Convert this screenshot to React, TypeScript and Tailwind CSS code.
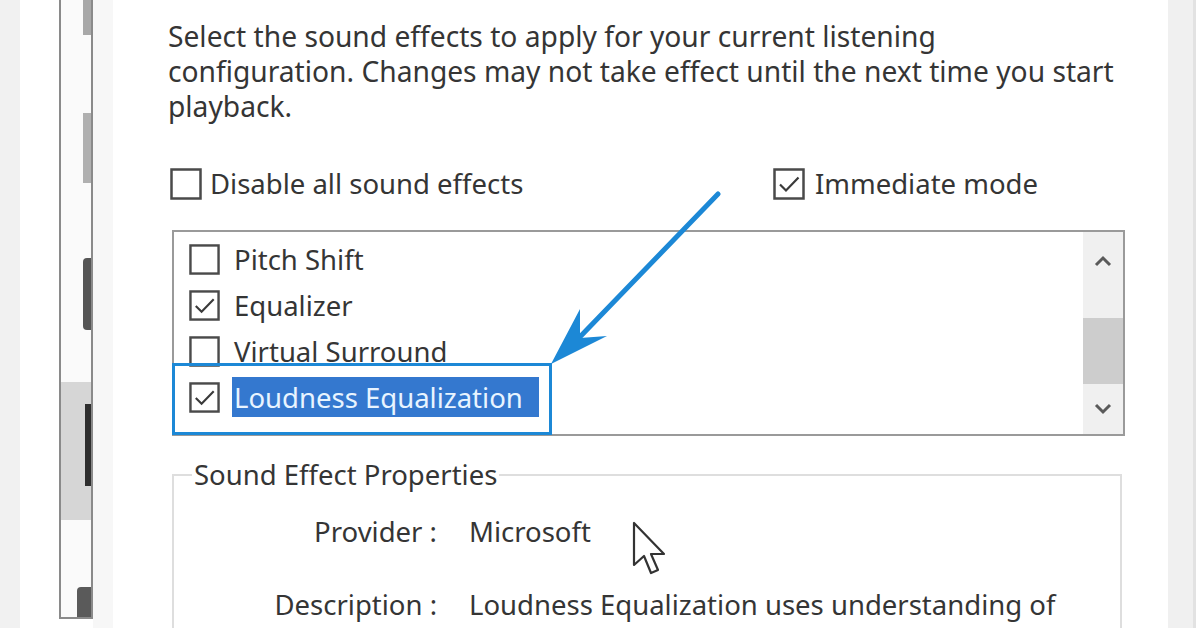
import React from "react";

const font = { fontFamily: '"Noto Sans", "Open Sans", sans-serif' };

function Box({ checked, size = 32 }: { checked?: boolean; size?: number }) {
  return (
    <svg width={size} height={size} viewBox="0 0 32 32" className="shrink-0">
      <rect x="1.5" y="1.5" width="29" height="29" fill="white" stroke="#4a4a4a" strokeWidth="2.5" />
      {checked && <path d="M7 16.5 L13 22.5 L25.5 9.5" fill="none" stroke="#3a3a3a" strokeWidth="2.2" />}
    </svg>
  );
}

function Chevron({ up }: { up?: boolean }) {
  return (
    <svg width="20" height="14" viewBox="0 0 20 14">
      <path d={up ? "M3 11 L10 4 L17 11" : "M3 3 L10 10 L17 3"} fill="none" stroke="#5a5a5a" strokeWidth="3" />
    </svg>
  );
}

export default function App() {
  return (
    <div className="relative flex w-[1196px] h-[628px] overflow-hidden bg-white text-[#353535]" style={font}>
      {/* window edge on the left */}
      <div className="flex h-full shrink-0">
        <div className="w-[20px] bg-[#f1f1f1]" />
        <div className="w-[39px] bg-white" />
        <div className="w-[34px] h-[619px] border-x-2 border-b-2 border-[#8a8a8a] bg-[#fafafa] flex flex-col items-end">
          <div className="h-[35px] w-[8px] bg-[#a8a8a8]" />
          <div className="h-[78px]" />
          <div className="h-[70px] w-[8px] bg-[#b0b0b0]" />
          <div className="h-[75px]" />
          <div className="h-[72px] w-[8px] bg-[#555] rounded-l-sm" />
          <div className="h-[52px]" />
          <div className="w-full h-[138px] bg-[#d6d6d6] flex flex-col items-end">
            <div className="h-[22px]" />
            <div className="h-[82px] w-[6px] bg-[#2e2e2e]" />
          </div>
          <div className="flex-1" />
          <div className="h-[30px] w-[14px] bg-[#5a5a5a] rounded-tl" />
        </div>
        <div className="w-[20px] bg-[#f7f7f7]" />
      </div>

      {/* dialog body */}
      <div className="w-[1055px] shrink-0 min-w-0 overflow-hidden bg-white pl-[55px] pr-[43px] pt-[19px] text-[27.5px] leading-[35px]">
        <p className="whitespace-nowrap text-[28.2px]">
          Select the sound effects to apply for your current listening
          <br />
          configuration. Changes may not take effect until the next time you start
          <br />
          playback.
        </p>

        <div className="flex items-center mt-[42px] pl-[2px]">
          <Box />
          <span className="ml-[8px]">Disable all sound effects</span>
          <div className="ml-auto mr-[87px] flex items-center">
            <Box checked />
            <span className="ml-[10px]">Immediate mode</span>
          </div>
        </div>

        <div className="mt-[29px] ml-[4px] h-[206px] border-2 border-[#9a9a9a] flex">
          <div className="flex-1 pt-[11px] pl-[15px] flex flex-col gap-[14px] overflow-hidden">
            {[
              ["Pitch Shift", false],
              ["Equalizer", true],
              ["Virtual Surround", false],
            ].map(([name, on]) => (
              <div key={name as string} className="flex items-center h-[32px]">
                <Box checked={on as boolean} size={31} />
                <span className="ml-[14px]">{name}</span>
              </div>
            ))}
            <div className="flex items-center h-[32px]">
              <Box checked size={31} />
              <span className="ml-[12px] pl-[2px] pr-[16px] h-[40px] flex items-center bg-[#3478cf] text-[#e8f4ff]">
                Loudness Equalization
              </span>
            </div>
          </div>
          <div className="w-[40px] bg-[#f0f0f0] flex flex-col items-center">
            <div className="h-[58px] flex items-center justify-center">
              <Chevron up />
            </div>
            <div className="h-[28px]" />
            <div className="w-full h-[66px] bg-[#cdcdcd]" />
            <div className="flex-1 flex items-center justify-center">
              <Chevron />
            </div>
          </div>
        </div>

        <fieldset className="mt-[21px] ml-[4px] w-[950px] min-w-0 border-2 border-[#dedede] pl-[18px] pr-0 pt-[22px] h-[300px]">
          <legend className="px-[2px] leading-[35px]">Sound Effect Properties</legend>
          <div className="grid grid-cols-[245px_minmax(0,1fr)] gap-x-[32px] gap-y-[38px] overflow-hidden">
            <span className="text-right">Provider :</span>
            <span>Microsoft</span>
            <span className="text-right">Description :</span>
            <span>
              Loudness Equalization uses understanding of human hearing to reduce perceived volume differences.
            </span>
          </div>
        </fieldset>
      </div>

      {/* window edge on the right */}
      <div className="w-[28px] h-full shrink-0 bg-[#f0f0f0] border-r-[3px] border-[#e2e2e2]" />

      {/* annotation: highlight box and arrow */}
      <div className="absolute left-[172px] top-[363px] w-[380px] h-[72px] border-[3px] border-[#1c88d6]" />
      <svg className="absolute left-0 top-0 pointer-events-none" width="1196" height="628">
        <line x1="718" y1="194" x2="575" y2="342" stroke="#1c88d6" strokeWidth="5" strokeLinecap="round" />
        <polygon points="551,364 580,309 580,338 607,336" fill="#1c88d6" />
      </svg>

      {/* mouse pointer */}
      <svg className="absolute left-[632px] top-[521px]" width="40" height="58" viewBox="0 0 20 29">
        <path d="M1 1 L1 22 L6 17.5 L9.5 26 L13 24.5 L9.5 16.5 L16 16.5 Z" fill="white" stroke="#333" strokeWidth="1.1" strokeLinejoin="round" />
      </svg>
    </div>
  );
}
